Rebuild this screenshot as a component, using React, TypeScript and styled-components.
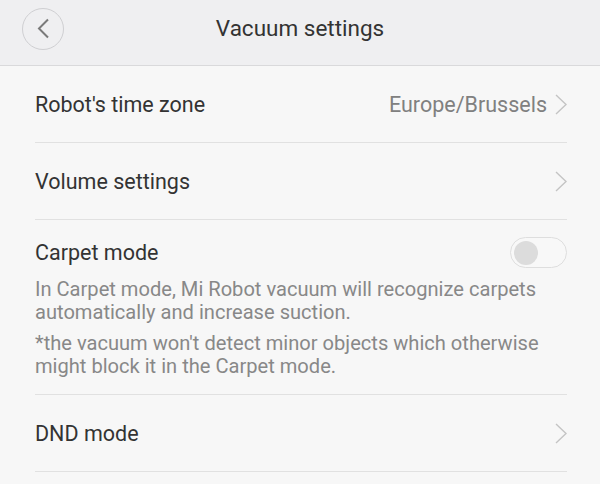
import styled, { createGlobalStyle } from "styled-components";

const GlobalStyle = createGlobalStyle`
  html, body {
    margin: 0;
    padding: 0;
    background: #f7f7f7;
  }
  body {
    font-family: Roboto, "Liberation Sans", sans-serif;
    width: 600px;
    height: 484px;
    overflow: hidden;
  }
`;

const Page = styled.div`
  width: 600px;
  height: 484px;
  background: #f7f7f7;
`;

const Header = styled.header`
  height: 65px;
  display: grid;
  grid-template-columns: 1fr auto 1fr;
  align-items: center;
  background: #efeff1;
  border-bottom: 1px solid #d9d9db;
`;

const BackButton = styled.button`
  width: 42px;
  height: 42px;
  margin: -8px 0 0 22px;
  padding: 0;
  border-radius: 50%;
  border: 1px solid #cfcfd2;
  background: transparent;
  display: flex;
  align-items: center;
  justify-content: center;
`;

const Title = styled.h1`
  margin: -9px 0 0;
  font-size: 22.5px;
  font-weight: 400;
  color: #333;
`;

const List = styled.div`
  display: flex;
  flex-direction: column;
  padding: 0 33px 0 35px;
`;

const Row = styled.div`
  height: 76px;
  display: flex;
  align-items: center;
  justify-content: space-between;
  border-bottom: 1px solid #e1e1e1;
`;

const Label = styled.span`
  font-size: 21.5px;
  color: #333;
`;

const Trail = styled.div`
  display: flex;
  align-items: center;
  gap: 8px;
`;

const Value = styled.span`
  font-size: 21.5px;
  color: #808080;
`;

const Block = styled.div`
  padding: 17px 0 16px;
  border-bottom: 1px solid #e1e1e1;
`;

const BlockHead = styled.div`
  display: flex;
  align-items: center;
  justify-content: space-between;
  height: 31px;
  margin-bottom: 10px;
`;

const Note = styled.p`
  margin: 0 0 8px;
  font-size: 20.1px;
  line-height: 23px;
  color: #888;
  &:last-child {
    margin-bottom: 0;
  }
`;

const Switch = styled.div`
  box-sizing: border-box;
  width: 57px;
  height: 31px;
  border-radius: 16px;
  border: 1.5px solid #dedede;
  background: #f8f8f8;
  display: flex;
  align-items: center;
  padding-left: 2.5px;
`;

const Knob = styled.div`
  width: 24px;
  height: 24px;
  border-radius: 50%;
  background: #dcdcdc;
`;

function Chevron() {
  return (
    <svg width="12" height="21" viewBox="0 0 12 21">
      <path d="M1 1 L11 10.5 L1 20" fill="none" stroke="#c4c4c4" strokeWidth="1.4" />
    </svg>
  );
}

export default function App() {
  return (
    <Page>
      <GlobalStyle />
      <Header>
        <div>
          <BackButton aria-label="Back">
            <svg width="13" height="21" viewBox="0 0 13 21">
              <path d="M11 1.5 L2 10.5 L11 19.5" fill="none" stroke="#7a7a7a" strokeWidth="2" />
            </svg>
          </BackButton>
        </div>
        <Title>Vacuum settings</Title>
        <div />
      </Header>
      <List>
        <Row>
          <Label>Robot's time zone</Label>
          <Trail>
            <Value>Europe/Brussels</Value>
            <Chevron />
          </Trail>
        </Row>
        <Row>
          <Label>Volume settings</Label>
          <Chevron />
        </Row>
        <Block>
          <BlockHead>
            <Label>Carpet mode</Label>
            <Switch>
              <Knob />
            </Switch>
          </BlockHead>
          <Note>
            In Carpet mode, Mi Robot vacuum will recognize carpets automatically and increase suction.
          </Note>
          <Note>*the vacuum won't detect minor objects which otherwise might block it in the Carpet mode.</Note>
        </Block>
        <Row>
          <Label>DND mode</Label>
          <Chevron />
        </Row>
      </List>
    </Page>
  );
}
